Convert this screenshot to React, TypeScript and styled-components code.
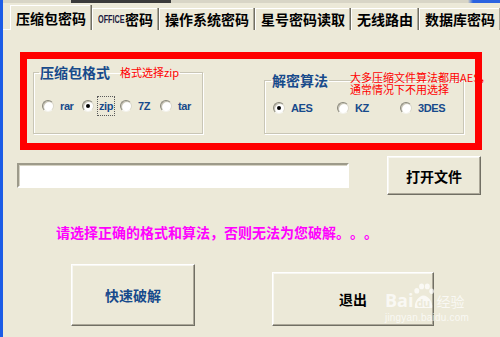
import React from "react"
import styled, { createGlobalStyle } from "styled-components"

const colors = {
  face: "#ECE9D8",
  light: "#FFFFFF",
  shadow: "#ACA899",
  dark: "#716F64",
  frame: "#1C5CE6",
  label: "#174A8B",
  red: "#FF0000",
  magenta: "#FF00FF",
}

const cjk = `"Noto Sans CJK SC", "Noto Sans", sans-serif`
const latin = `"Liberation Sans", "Noto Sans CJK SC", sans-serif`

const GlobalStyle = createGlobalStyle`
  html, body {
    margin: 0;
    padding: 0;
    width: 500px;
    height: 337px;
    overflow: hidden;
    background: ${colors.face};
    text-spacing-trim: space-all;
  }
  * { box-sizing: border-box; }
`

const Window = styled.div`
  position: relative;
  width: 500px;
  height: 337px;
  display: flex;
  flex-direction: column;
  background: ${colors.face};
  border-left: 3px solid ${colors.frame};
  font-family: ${cjk};
`

// bottom edge of the cut-off title bar
const TitleStrip = styled.div`
  height: 3px;
  flex: none;
  background: linear-gradient(
    to right,
    #d8d5c6 0px,
    #d8d5c6 68px,
    #3a3a3a 68px,
    #3a3a3a 168px,
    #d8d5c6 168px,
    #d8d5c6 465px,
    #2b63e0 470px
  );
`

const TabBar = styled.div`
  height: 27px;
  flex: none;
  display: flex;
  align-items: flex-end;
  padding-left: 7px;
  box-shadow: inset 0 -1px 0 ${colors.light};
  overflow: hidden;
`

const Tab = styled.div<{ $active?: boolean }>`
  flex: none;
  height: ${p => (p.$active ? "25px" : "22px")};
  display: flex;
  align-items: center;
  padding: 0 5px;
  background: ${colors.face};
  border-left: 1px solid ${colors.light};
  border-right: 1px solid ${colors.dark};
  box-shadow: inset -1px 0 0 ${colors.shadow}, inset 0 1px 0 ${colors.light};
  font-size: 14px;
  font-weight: 700;
  color: #000;
  white-space: nowrap;
  position: relative;
  z-index: ${p => (p.$active ? 1 : 0)};
`

// the squeezed latin word in the second tab
const TabLatin = styled.span`
  display: inline-block;
  width: 27px;
  font-family: ${latin};
  font-size: 11px;
  font-weight: 700;
  letter-spacing: 0;
  color: #1a1a40;
  transform: scaleX(0.66);
  transform-origin: left center;
`

const Panel = styled.div`
  flex: 1;
  display: flex;
  flex-direction: column;
`

const RedFrame = styled.div`
  position: relative;
  margin: 22px 0 0 17px;
  width: 462px;
  height: 98px;
  border: 7px solid ${colors.red};
  display: flex;
  align-items: flex-end;
  padding: 0 0 9px 6px;
`

const Group = styled.fieldset<{ $width: number; $height: number; $gap?: number }>`
  margin: 0 0 0 ${p => p.$gap ?? 0}px;
  padding: 0;
  width: ${p => p.$width}px;
  height: ${p => p.$height}px;
  border: 1px solid #c9c6b6;
  box-shadow: 1px 1px 0 ${colors.light}, inset 1px 1px 0 ${colors.light};
  min-width: 0;
  display: flex;
  flex-direction: column;
`

const Legend = styled.legend<{ $offset: number }>`
  margin-left: ${p => p.$offset}px;
  padding: 0 1px;
  height: 14px;
  line-height: 14px;
  display: flex;
  align-items: center;
  white-space: nowrap;
`

const LegendText = styled.span`
  font-size: 14px;
  font-weight: 700;
  color: ${colors.label};
`

const Note = styled.span`
  margin-left: 10px;
  font-size: 11px;
  line-height: 11px;
  color: ${colors.red};
`

const AlgoNote = styled.div`
  position: absolute;
  left: 323px;
  top: 12px;
  font-size: 11px;
  line-height: 12px;
  color: ${colors.red};
  white-space: nowrap;
`

const RadioRow = styled.div<{ $cols: string; $top: number }>`
  display: grid;
  grid-template-columns: ${p => p.$cols};
  align-items: center;
  height: 20px;
  margin-top: ${p => p.$top}px;
  padding-left: 8px;
`

const RadioItem = styled.div`
  display: flex;
  align-items: center;
  height: 20px;
`

const RadioCircle = styled.span<{ $checked?: boolean }>`
  position: relative;
  flex: none;
  width: 12px;
  height: 12px;
  border-radius: 50%;
  background: radial-gradient(circle at 60% 60%, #ffffff 0%, #ffffff 45%, #e4e2d8 100%);
  border: 1px solid;
  border-color: #8a887c #dcd9cc #f4f3ee #8a887c;
  box-shadow: inset 1px 1px 0 #c4c1b2;

  &::after {
    content: "";
    display: ${p => (p.$checked ? "block" : "none")};
    position: absolute;
    left: 3px;
    top: 3px;
    width: 4px;
    height: 4px;
    border-radius: 50%;
    background: #000;
  }
`

const RadioLabel = styled.span<{ $focused?: boolean }>`
  margin-left: ${p => (p.$focused ? "3px" : "6px")};
  padding: ${p => (p.$focused ? "2px 1px" : "0")};
  border: ${p => (p.$focused ? "1px dotted #5a5a5a" : "none")};
  font-family: ${latin};
  font-size: 11px;
  font-weight: 700;
  letter-spacing: -0.4px;
  line-height: 14px;
  color: ${colors.label};
`

const FileRow = styled.div`
  display: flex;
  align-items: center;
  margin: 6px 0 0 14px;
  gap: 38px;
`

const PathInput = styled.input`
  width: 332px;
  height: 25px;
  background: #fff;
  border: 2px solid;
  border-color: #9d9a8a ${colors.light} ${colors.light} #9d9a8a;
  box-shadow: inset 1px 1px 0 #d5d2c3;
  outline: none;
`

const Button = styled.button<{ $w: number; $h: number; $color?: string }>`
  width: ${p => p.$w}px;
  height: ${p => p.$h}px;
  padding: 0;
  background: ${colors.face};
  border: 1px solid;
  border-color: ${colors.light} ${colors.dark} ${colors.dark} ${colors.light};
  box-shadow: inset -1px -1px 0 ${colors.shadow}, inset 1px 1px 0 #f7f6f0;
  font-family: ${cjk};
  font-size: 14px;
  font-weight: 700;
  color: ${p => p.$color ?? "#000"};
  cursor: default;
`

const Hint = styled.div`
  margin: 29px 0 0 53px;
  font-size: 14px;
  line-height: 16px;
  font-weight: 700;
  color: ${colors.magenta};
  white-space: nowrap;
`

const ActionRow = styled.div`
  display: flex;
  align-items: flex-end;
  gap: 77px;
  margin: 24px 0 0 68px;
`

const Watermark = styled.div`
  position: absolute;
  left: 382px;
  top: 283px;
  display: flex;
  flex-direction: column;
  color: rgba(255, 255, 255, 0.72);
  pointer-events: none;
`

const MarkRow = styled.div`
  display: flex;
  align-items: flex-end;
  height: 26px;
`

const MarkBai = styled.span`
  font-family: "Open Sans", "Liberation Sans", sans-serif;
  font-size: 18px;
  font-weight: 700;
  line-height: 18px;
`

const MarkJingyan = styled.span`
  margin-left: 2px;
  font-size: 14px;
  line-height: 16px;
`

const MarkUrl = styled.span`
  margin-top: 4px;
  font-family: "Liberation Sans", sans-serif;
  font-size: 10px;
  line-height: 10px;
  letter-spacing: 0.2px;
`

function Paw() {
  return (
    <svg width="21" height="26" viewBox="0 0 22 27" style={{ display: "block" }}>
      <g fill="rgba(255,255,255,0.72)">
        <ellipse cx="4" cy="8" rx="2.6" ry="3" />
        <ellipse cx="9" cy="3.5" rx="2.6" ry="3" />
        <ellipse cx="15" cy="3.5" rx="2.6" ry="3" />
        <ellipse cx="19.5" cy="8.5" rx="2.4" ry="2.8" />
        <path d="M2 26 C1 20 6 13 11 13 C16 13 21 20 20 26 Z" />
      </g>
      <text
        x="11"
        y="25"
        textAnchor="middle"
        fontFamily="'Open Sans', 'Liberation Sans', sans-serif"
        fontWeight="700"
        fontSize="11"
        fill="#ECE9D8"
      >
        du
      </text>
    </svg>
  )
}

interface RadioOption {
  label: string
  checked?: boolean
  focused?: boolean
}

const formats: RadioOption[] = [
  { label: "rar" },
  { label: "zip", checked: true, focused: true },
  { label: "7Z" },
  { label: "tar" },
]

const algorithms: RadioOption[] = [
  { label: "AES", checked: true },
  { label: "KZ" },
  { label: "3DES" },
]

function RadioGroup({ options, cols, top }: { options: RadioOption[]; cols: string; top: number }) {
  return (
    <RadioRow $cols={cols} $top={top}>
      {options.map(o => (
        <RadioItem key={o.label}>
          <RadioCircle $checked={o.checked} />
          <RadioLabel $focused={o.focused}>{o.label}</RadioLabel>
        </RadioItem>
      ))}
    </RadioRow>
  )
}

export default function App() {
  return (
    <>
      <GlobalStyle />
      <Window>
        <TitleStrip />
        <TabBar>
          <Tab $active>压缩包密码</Tab>
          <Tab>
            <TabLatin>OFFICE</TabLatin>密码
          </Tab>
          <Tab>操作系统密码</Tab>
          <Tab>星号密码读取</Tab>
          <Tab>无线路由</Tab>
          <Tab>数据库密码</Tab>
        </TabBar>

        <Panel>
          <RedFrame>
            <Group $width={170} $height={69}>
              <Legend $offset={5}>
                <LegendText>压缩包格式</LegendText>
                <Note>格式选择zip</Note>
              </Legend>
              <RadioGroup options={formats} cols="40px 38px 40px auto" top={17} />
            </Group>

            <Group $width={200} $height={61} $gap={61}>
              <Legend $offset={6}>
                <LegendText>解密算法</LegendText>
              </Legend>
              <RadioGroup options={algorithms} cols="64px 63px auto" top={11} />
            </Group>

            <AlgoNote>
              大多压缩文件算法都用AES，
              <br />
              通常情况下不用选择
            </AlgoNote>
          </RedFrame>

          <FileRow>
            <PathInput type="text" />
            <Button $w={94} $h={39}>打开文件</Button>
          </FileRow>

          <Hint>请选择正确的格式和算法，否则无法为您破解。。。</Hint>

          <ActionRow>
            <Button $w={124} $h={62} $color={colors.label}>快速破解</Button>
            <Button $w={162} $h={54}>退出</Button>
          </ActionRow>
        </Panel>

        <Watermark>
          <MarkRow>
            <MarkBai>Bai</MarkBai>
            <Paw />
            <MarkJingyan>经验</MarkJingyan>
          </MarkRow>
          <MarkUrl>jingyan.baidu.com</MarkUrl>
        </Watermark>
      </Window>
    </>
  )
}
